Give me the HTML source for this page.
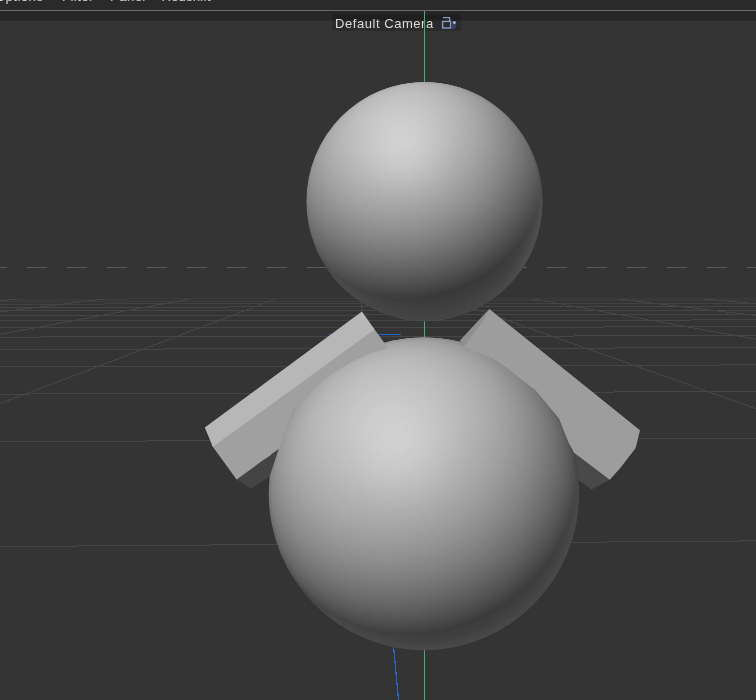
<!DOCTYPE html>
<html><head><meta charset="utf-8"><title>Viewport</title>
<style>
html,body{margin:0;padding:0;}
body{width:756px;height:700px;overflow:hidden;position:relative;background:#343434;font-family:"Liberation Sans",sans-serif;}
#menubar{position:absolute;left:0;top:0;width:756px;height:10px;background:#2a2a2a;overflow:hidden;}
#menubar span{position:absolute;top:-10.4px;font-size:13px;line-height:14px;letter-spacing:0.5px;color:#d0d0d0;white-space:nowrap;}
#sep{position:absolute;left:0;top:10px;width:756px;height:1px;background:#6c6c6c;}
#band{position:absolute;left:0;top:11px;width:756px;height:9px;background:#262626;}
#band2{position:absolute;left:0;top:20px;width:756px;height:1px;background:#2d2d2d;}
#scene{position:absolute;left:0;top:0;}
#camlabel{position:absolute;left:332px;top:14px;width:129px;height:17px;background:rgba(0,0,0,0.17);border-radius:2px;}
#camlabel span{will-change:transform;position:absolute;left:3px;top:2px;font-size:13px;line-height:15px;letter-spacing:0.55px;color:#dadada;white-space:nowrap;}
#camicon{position:absolute;left:109px;top:2px;}
#yaxis{position:absolute;left:424px;top:11px;width:1px;height:21px;background:#41b06e;}
</style></head><body>
<div id="menubar"><span style="left:-5px">Options</span><span style="left:62px">Filter</span><span style="left:110px">Panel</span><span style="left:161.5px;letter-spacing:0.2px">Redshift</span></div>
<div id="sep"></div><div id="band"></div><div id="band2"></div>
<svg id="scene" width="756" height="700" viewBox="0 0 756 700">
<defs>
<radialGradient id="gSpecH"><stop offset="0" stop-color="#fff" stop-opacity="0.0392"/><stop offset="0.25" stop-color="#fff" stop-opacity="0.0333"/><stop offset="0.5" stop-color="#fff" stop-opacity="0.0196"/><stop offset="0.75" stop-color="#fff" stop-opacity="0.0071"/><stop offset="1" stop-color="#fff" stop-opacity="0"/></radialGradient>
<radialGradient id="gDarkH"><stop offset="0" stop-color="#000" stop-opacity="0"/><stop offset="0.92" stop-color="#000" stop-opacity="0"/><stop offset="1" stop-color="#000" stop-opacity="0.14"/></radialGradient>
<radialGradient id="gRimH"><stop offset="0.000" stop-color="#fff" stop-opacity="0.0000"/><stop offset="0.200" stop-color="#fff" stop-opacity="0.0000"/><stop offset="0.300" stop-color="#fff" stop-opacity="0.0002"/><stop offset="0.400" stop-color="#fff" stop-opacity="0.0008"/><stop offset="0.500" stop-color="#fff" stop-opacity="0.0021"/><stop offset="0.600" stop-color="#fff" stop-opacity="0.0050"/><stop offset="0.700" stop-color="#fff" stop-opacity="0.0110"/><stop offset="0.750" stop-color="#fff" stop-opacity="0.0159"/><stop offset="0.800" stop-color="#fff" stop-opacity="0.0229"/><stop offset="0.850" stop-color="#fff" stop-opacity="0.0330"/><stop offset="0.900" stop-color="#fff" stop-opacity="0.0484"/><stop offset="0.930" stop-color="#fff" stop-opacity="0.0621"/><stop offset="0.950" stop-color="#fff" stop-opacity="0.0746"/><stop offset="0.970" stop-color="#fff" stop-opacity="0.0919"/><stop offset="0.985" stop-color="#fff" stop-opacity="0.1013"/><stop offset="0.995" stop-color="#fff" stop-opacity="0.1013"/><stop offset="1.000" stop-color="#fff" stop-opacity="0.1013"/></radialGradient>
<radialGradient id="gSpecB"><stop offset="0" stop-color="#fff" stop-opacity="0.0431"/><stop offset="0.25" stop-color="#fff" stop-opacity="0.0367"/><stop offset="0.5" stop-color="#fff" stop-opacity="0.0216"/><stop offset="0.75" stop-color="#fff" stop-opacity="0.0078"/><stop offset="1" stop-color="#fff" stop-opacity="0"/></radialGradient>
<radialGradient id="gRimB"><stop offset="0.000" stop-color="#fff" stop-opacity="0.0000"/><stop offset="0.200" stop-color="#fff" stop-opacity="0.0006"/><stop offset="0.300" stop-color="#fff" stop-opacity="0.0020"/><stop offset="0.400" stop-color="#fff" stop-opacity="0.0045"/><stop offset="0.500" stop-color="#fff" stop-opacity="0.0087"/><stop offset="0.600" stop-color="#fff" stop-opacity="0.0152"/><stop offset="0.700" stop-color="#fff" stop-opacity="0.0251"/><stop offset="0.750" stop-color="#fff" stop-opacity="0.0319"/><stop offset="0.800" stop-color="#fff" stop-opacity="0.0402"/><stop offset="0.850" stop-color="#fff" stop-opacity="0.0509"/><stop offset="0.900" stop-color="#fff" stop-opacity="0.0651"/><stop offset="0.930" stop-color="#fff" stop-opacity="0.0764"/><stop offset="0.950" stop-color="#fff" stop-opacity="0.0859"/><stop offset="0.970" stop-color="#fff" stop-opacity="0.0982"/><stop offset="0.985" stop-color="#fff" stop-opacity="0.1046"/><stop offset="0.995" stop-color="#fff" stop-opacity="0.1046"/><stop offset="1.000" stop-color="#fff" stop-opacity="0.1046"/></radialGradient>


</defs>
<!-- horizon -->
<line x1="-13" y1="267.5" x2="756" y2="267.5" stroke="#585858" stroke-width="1" stroke-dasharray="20 20" shape-rendering="crispEdges"/>
<g stroke="#454545" stroke-width="1" fill="none" shape-rendering="crispEdges">
<line x1="0" y1="546.59" x2="756" y2="540.89" stroke-opacity="1.00"/>
<line x1="0" y1="441.69" x2="756" y2="438.13" stroke-opacity="1.00"/>
<line x1="0" y1="394.11" x2="756" y2="391.52" stroke-opacity="1.00"/>
<line x1="0" y1="366.94" x2="756" y2="364.91" stroke-opacity="1.00"/>
<line x1="0" y1="349.37" x2="756" y2="347.70" stroke-opacity="1.00"/>
<line x1="0" y1="337.08" x2="756" y2="335.66" stroke-opacity="1.00"/>
<line x1="0" y1="328.00" x2="756" y2="326.76" stroke-opacity="1.00"/>
<line x1="0" y1="321.01" x2="756" y2="319.92" stroke-opacity="1.00"/>
<line x1="0" y1="315.47" x2="756" y2="314.49" stroke-opacity="1.00"/>
<line x1="0" y1="310.97" x2="756" y2="310.09" stroke-opacity="1.00"/>
<line x1="0" y1="307.25" x2="756" y2="306.43" stroke-opacity="1.00"/>
<line x1="0" y1="304.11" x2="756" y2="303.36" stroke-opacity="0.80"/>
<line x1="0" y1="301.43" x2="756" y2="300.73" stroke-opacity="0.60"/>
<line x1="0" y1="299.11" x2="756" y2="298.47" stroke-opacity="0.40"/>
<line x1="17.88" y1="299.00" x2="-4531.87" y2="720.00"/>
<line x1="103.72" y1="299.00" x2="-3298.81" y2="720.00"/>
<line x1="189.55" y1="299.00" x2="-2065.74" y2="720.00"/>
<line x1="275.39" y1="299.00" x2="-832.68" y2="720.00"/>
<line x1="447.07" y1="299.00" x2="1633.44" y2="720.00"/>
<line x1="532.90" y1="299.00" x2="2866.51" y2="720.00"/>
<line x1="618.74" y1="299.00" x2="4099.57" y2="720.00"/>
<line x1="704.58" y1="299.00" x2="5332.63" y2="720.00"/>
</g>
<!-- axes -->
<line x1="424.5" y1="31" x2="424.5" y2="700" stroke="#41b06e" stroke-width="1" shape-rendering="crispEdges"/>
<line x1="361.6" y1="303" x2="362.3" y2="311.5" stroke="#4c4c4c" stroke-width="1" shape-rendering="crispEdges"/>
<line x1="392.94" y1="640" x2="398.52" y2="700" stroke="#2366cc" stroke-width="1.2" shape-rendering="crispEdges"/>
<line x1="329" y1="334.5" x2="401" y2="334.8" stroke="#2366cc" stroke-width="1.2" shape-rendering="crispEdges"/>
<!-- head -->
<clipPath id="cH"><ellipse cx="424.6" cy="201.6" rx="118.3" ry="119.9"/></clipPath>
<g clip-path="url(#cH)" style="isolation:isolate">
<ellipse cx="424.6" cy="201.6" rx="118.3" ry="119.9" fill="rgb(52,52,52)"/>
<ellipse cx="424.50" cy="201.33" rx="94.00" ry="119.10" transform="rotate(-111.00 424.50 201.33)" fill="rgb(53,53,53)"/>
<ellipse cx="424.29" cy="200.79" rx="94.00" ry="119.09" transform="rotate(-111.00 424.29 200.79)" fill="rgb(54,54,54)"/>
<ellipse cx="424.09" cy="200.26" rx="93.99" ry="119.08" transform="rotate(-111.00 424.09 200.26)" fill="rgb(55,55,55)"/>
<ellipse cx="423.89" cy="199.72" rx="93.97" ry="119.06" transform="rotate(-111.00 423.89 199.72)" fill="rgb(56,56,56)"/>
<ellipse cx="423.68" cy="199.18" rx="93.95" ry="119.03" transform="rotate(-111.00 423.68 199.18)" fill="rgb(57,57,57)"/>
<ellipse cx="423.48" cy="198.65" rx="93.92" ry="118.99" transform="rotate(-111.00 423.48 198.65)" fill="rgb(58,58,58)"/>
<ellipse cx="423.28" cy="198.11" rx="93.88" ry="118.95" transform="rotate(-111.00 423.28 198.11)" fill="rgb(59,59,59)"/>
<ellipse cx="423.07" cy="197.57" rx="93.84" ry="118.90" transform="rotate(-111.00 423.07 197.57)" fill="rgb(60,60,60)"/>
<ellipse cx="422.87" cy="197.04" rx="93.80" ry="118.84" transform="rotate(-111.00 422.87 197.04)" fill="rgb(61,61,61)"/>
<ellipse cx="422.67" cy="196.50" rx="93.75" ry="118.77" transform="rotate(-111.00 422.67 196.50)" fill="rgb(62,62,62)"/>
<ellipse cx="422.46" cy="195.96" rx="93.69" ry="118.70" transform="rotate(-111.00 422.46 195.96)" fill="rgb(63,63,63)"/>
<ellipse cx="422.26" cy="195.43" rx="93.62" ry="118.62" transform="rotate(-111.00 422.26 195.43)" fill="rgb(64,64,64)"/>
<ellipse cx="422.06" cy="194.89" rx="93.56" ry="118.53" transform="rotate(-111.00 422.06 194.89)" fill="rgb(65,65,65)"/>
<ellipse cx="421.85" cy="194.35" rx="93.48" ry="118.44" transform="rotate(-111.00 421.85 194.35)" fill="rgb(66,66,66)"/>
<ellipse cx="421.65" cy="193.81" rx="93.40" ry="118.33" transform="rotate(-111.00 421.65 193.81)" fill="rgb(67,67,67)"/>
<ellipse cx="421.45" cy="193.28" rx="93.31" ry="118.22" transform="rotate(-111.00 421.45 193.28)" fill="rgb(68,68,68)"/>
<ellipse cx="421.24" cy="192.74" rx="93.22" ry="118.11" transform="rotate(-111.00 421.24 192.74)" fill="rgb(69,69,69)"/>
<ellipse cx="421.04" cy="192.20" rx="93.12" ry="117.98" transform="rotate(-111.00 421.04 192.20)" fill="rgb(70,70,70)"/>
<ellipse cx="420.84" cy="191.67" rx="93.02" ry="117.85" transform="rotate(-111.00 420.84 191.67)" fill="rgb(71,71,71)"/>
<ellipse cx="420.63" cy="191.13" rx="92.91" ry="117.71" transform="rotate(-111.00 420.63 191.13)" fill="rgb(73,73,73)"/>
<ellipse cx="420.43" cy="190.59" rx="92.79" ry="117.56" transform="rotate(-111.00 420.43 190.59)" fill="rgb(74,74,74)"/>
<ellipse cx="420.23" cy="190.06" rx="92.67" ry="117.41" transform="rotate(-111.00 420.23 190.06)" fill="rgb(75,75,75)"/>
<ellipse cx="420.02" cy="189.52" rx="92.54" ry="117.25" transform="rotate(-111.00 420.02 189.52)" fill="rgb(76,76,76)"/>
<ellipse cx="419.82" cy="188.98" rx="92.41" ry="117.08" transform="rotate(-111.00 419.82 188.98)" fill="rgb(77,77,77)"/>
<ellipse cx="419.62" cy="188.44" rx="92.27" ry="116.90" transform="rotate(-111.00 419.62 188.44)" fill="rgb(78,78,78)"/>
<ellipse cx="419.41" cy="187.91" rx="92.12" ry="116.71" transform="rotate(-111.00 419.41 187.91)" fill="rgb(79,79,79)"/>
<ellipse cx="419.21" cy="187.37" rx="91.97" ry="116.52" transform="rotate(-111.00 419.21 187.37)" fill="rgb(80,80,80)"/>
<ellipse cx="419.01" cy="186.83" rx="91.81" ry="116.32" transform="rotate(-111.00 419.01 186.83)" fill="rgb(81,81,81)"/>
<ellipse cx="418.80" cy="186.30" rx="91.65" ry="116.11" transform="rotate(-111.00 418.80 186.30)" fill="rgb(82,82,82)"/>
<ellipse cx="418.60" cy="185.76" rx="91.47" ry="115.89" transform="rotate(-111.00 418.60 185.76)" fill="rgb(83,83,83)"/>
<ellipse cx="418.40" cy="185.22" rx="91.30" ry="115.67" transform="rotate(-111.00 418.40 185.22)" fill="rgb(84,84,84)"/>
<ellipse cx="418.19" cy="184.69" rx="91.11" ry="115.44" transform="rotate(-111.00 418.19 184.69)" fill="rgb(85,85,85)"/>
<ellipse cx="417.99" cy="184.15" rx="90.92" ry="115.20" transform="rotate(-111.00 417.99 184.15)" fill="rgb(86,86,86)"/>
<ellipse cx="417.79" cy="183.61" rx="90.73" ry="114.95" transform="rotate(-111.00 417.79 183.61)" fill="rgb(87,87,87)"/>
<ellipse cx="417.58" cy="183.08" rx="90.53" ry="114.69" transform="rotate(-111.00 417.58 183.08)" fill="rgb(89,89,89)"/>
<ellipse cx="417.38" cy="182.54" rx="90.32" ry="114.43" transform="rotate(-111.00 417.38 182.54)" fill="rgb(90,90,90)"/>
<ellipse cx="417.18" cy="182.00" rx="90.10" ry="114.16" transform="rotate(-111.00 417.18 182.00)" fill="rgb(91,91,91)"/>
<ellipse cx="416.97" cy="181.46" rx="89.88" ry="113.87" transform="rotate(-111.00 416.97 181.46)" fill="rgb(92,92,92)"/>
<ellipse cx="416.77" cy="180.93" rx="89.65" ry="113.58" transform="rotate(-111.00 416.77 180.93)" fill="rgb(93,93,93)"/>
<ellipse cx="416.57" cy="180.39" rx="89.42" ry="113.29" transform="rotate(-111.00 416.57 180.39)" fill="rgb(94,94,94)"/>
<ellipse cx="416.36" cy="179.85" rx="89.18" ry="112.98" transform="rotate(-111.00 416.36 179.85)" fill="rgb(95,95,95)"/>
<ellipse cx="416.16" cy="179.32" rx="88.93" ry="112.67" transform="rotate(-111.00 416.16 179.32)" fill="rgb(96,96,96)"/>
<ellipse cx="415.96" cy="178.78" rx="88.67" ry="112.34" transform="rotate(-111.00 415.96 178.78)" fill="rgb(97,97,97)"/>
<ellipse cx="415.75" cy="178.24" rx="88.41" ry="112.01" transform="rotate(-111.00 415.75 178.24)" fill="rgb(98,98,98)"/>
<ellipse cx="415.55" cy="177.71" rx="88.14" ry="111.67" transform="rotate(-111.00 415.55 177.71)" fill="rgb(99,99,99)"/>
<ellipse cx="415.35" cy="177.17" rx="87.87" ry="111.32" transform="rotate(-111.00 415.35 177.17)" fill="rgb(101,101,101)"/>
<ellipse cx="415.14" cy="176.63" rx="87.58" ry="110.96" transform="rotate(-111.00 415.14 176.63)" fill="rgb(102,102,102)"/>
<ellipse cx="414.94" cy="176.10" rx="87.29" ry="110.60" transform="rotate(-111.00 414.94 176.10)" fill="rgb(103,103,103)"/>
<ellipse cx="414.73" cy="175.56" rx="87.00" ry="110.22" transform="rotate(-111.00 414.73 175.56)" fill="rgb(104,104,104)"/>
<ellipse cx="414.53" cy="175.02" rx="86.69" ry="109.83" transform="rotate(-111.00 414.53 175.02)" fill="rgb(105,105,105)"/>
<ellipse cx="414.33" cy="174.48" rx="86.38" ry="109.44" transform="rotate(-111.00 414.33 174.48)" fill="rgb(106,106,106)"/>
<ellipse cx="414.12" cy="173.95" rx="86.06" ry="109.03" transform="rotate(-111.00 414.12 173.95)" fill="rgb(107,107,107)"/>
<ellipse cx="413.92" cy="173.41" rx="85.73" ry="108.62" transform="rotate(-111.00 413.92 173.41)" fill="rgb(108,108,108)"/>
<ellipse cx="413.72" cy="172.87" rx="85.40" ry="108.20" transform="rotate(-111.00 413.72 172.87)" fill="rgb(109,109,109)"/>
<ellipse cx="413.51" cy="172.34" rx="85.06" ry="107.76" transform="rotate(-111.00 413.51 172.34)" fill="rgb(110,110,110)"/>
<ellipse cx="413.31" cy="171.80" rx="84.71" ry="107.32" transform="rotate(-111.00 413.31 171.80)" fill="rgb(112,112,112)"/>
<ellipse cx="413.11" cy="171.26" rx="84.35" ry="106.87" transform="rotate(-111.00 413.11 171.26)" fill="rgb(113,113,113)"/>
<ellipse cx="412.90" cy="170.73" rx="83.99" ry="106.41" transform="rotate(-111.00 412.90 170.73)" fill="rgb(114,114,114)"/>
<ellipse cx="412.70" cy="170.19" rx="83.61" ry="105.93" transform="rotate(-111.00 412.70 170.19)" fill="rgb(115,115,115)"/>
<ellipse cx="412.50" cy="169.65" rx="83.23" ry="105.45" transform="rotate(-111.00 412.50 169.65)" fill="rgb(116,116,116)"/>
<ellipse cx="412.29" cy="169.12" rx="82.84" ry="104.96" transform="rotate(-111.00 412.29 169.12)" fill="rgb(117,117,117)"/>
<ellipse cx="412.09" cy="168.58" rx="82.44" ry="104.45" transform="rotate(-111.00 412.09 168.58)" fill="rgb(118,118,118)"/>
<ellipse cx="411.89" cy="168.04" rx="82.04" ry="103.94" transform="rotate(-111.00 411.89 168.04)" fill="rgb(119,119,119)"/>
<ellipse cx="411.68" cy="167.50" rx="81.62" ry="103.41" transform="rotate(-111.00 411.68 167.50)" fill="rgb(121,121,121)"/>
<ellipse cx="411.48" cy="166.97" rx="81.20" ry="102.87" transform="rotate(-111.00 411.48 166.97)" fill="rgb(122,122,122)"/>
<ellipse cx="411.28" cy="166.43" rx="80.76" ry="102.33" transform="rotate(-111.00 411.28 166.43)" fill="rgb(123,123,123)"/>
<ellipse cx="411.07" cy="165.89" rx="80.32" ry="101.77" transform="rotate(-111.00 411.07 165.89)" fill="rgb(124,124,124)"/>
<ellipse cx="410.87" cy="165.36" rx="79.87" ry="101.19" transform="rotate(-111.00 410.87 165.36)" fill="rgb(125,125,125)"/>
<ellipse cx="410.67" cy="164.82" rx="79.41" ry="100.61" transform="rotate(-111.00 410.67 164.82)" fill="rgb(126,126,126)"/>
<ellipse cx="410.46" cy="164.28" rx="78.94" ry="100.01" transform="rotate(-111.00 410.46 164.28)" fill="rgb(127,127,127)"/>
<ellipse cx="410.26" cy="163.75" rx="78.46" ry="99.41" transform="rotate(-111.00 410.26 163.75)" fill="rgb(129,129,129)"/>
<ellipse cx="410.06" cy="163.21" rx="77.97" ry="98.79" transform="rotate(-111.00 410.06 163.21)" fill="rgb(130,130,130)"/>
<ellipse cx="409.85" cy="162.67" rx="77.47" ry="98.15" transform="rotate(-111.00 409.85 162.67)" fill="rgb(131,131,131)"/>
<ellipse cx="409.65" cy="162.13" rx="76.96" ry="97.51" transform="rotate(-111.00 409.65 162.13)" fill="rgb(132,132,132)"/>
<ellipse cx="409.45" cy="161.60" rx="76.44" ry="96.85" transform="rotate(-111.00 409.45 161.60)" fill="rgb(133,133,133)"/>
<ellipse cx="409.24" cy="161.06" rx="75.91" ry="96.18" transform="rotate(-111.00 409.24 161.06)" fill="rgb(134,134,134)"/>
<ellipse cx="409.04" cy="160.52" rx="75.37" ry="95.49" transform="rotate(-111.00 409.04 160.52)" fill="rgb(136,136,136)"/>
<ellipse cx="408.84" cy="159.99" rx="74.82" ry="94.79" transform="rotate(-111.00 408.84 159.99)" fill="rgb(137,137,137)"/>
<ellipse cx="408.63" cy="159.45" rx="74.25" ry="94.07" transform="rotate(-111.00 408.63 159.45)" fill="rgb(138,138,138)"/>
<ellipse cx="408.43" cy="158.91" rx="73.68" ry="93.34" transform="rotate(-111.00 408.43 158.91)" fill="rgb(139,139,139)"/>
<ellipse cx="408.23" cy="158.38" rx="73.09" ry="92.60" transform="rotate(-111.00 408.23 158.38)" fill="rgb(140,140,140)"/>
<ellipse cx="408.02" cy="157.84" rx="72.49" ry="91.84" transform="rotate(-111.00 408.02 157.84)" fill="rgb(141,141,141)"/>
<ellipse cx="407.82" cy="157.30" rx="71.87" ry="91.06" transform="rotate(-111.00 407.82 157.30)" fill="rgb(143,143,143)"/>
<ellipse cx="407.62" cy="156.77" rx="71.25" ry="90.27" transform="rotate(-111.00 407.62 156.77)" fill="rgb(144,144,144)"/>
<ellipse cx="407.41" cy="156.23" rx="70.61" ry="89.46" transform="rotate(-111.00 407.41 156.23)" fill="rgb(145,145,145)"/>
<ellipse cx="407.21" cy="155.69" rx="69.96" ry="88.63" transform="rotate(-111.00 407.21 155.69)" fill="rgb(146,146,146)"/>
<ellipse cx="407.01" cy="155.15" rx="69.29" ry="87.79" transform="rotate(-111.00 407.01 155.15)" fill="rgb(147,147,147)"/>
<ellipse cx="406.80" cy="154.62" rx="68.61" ry="86.93" transform="rotate(-111.00 406.80 154.62)" fill="rgb(149,149,149)"/>
<ellipse cx="406.60" cy="154.08" rx="67.92" ry="86.05" transform="rotate(-111.00 406.60 154.08)" fill="rgb(150,150,150)"/>
<ellipse cx="406.40" cy="153.54" rx="67.21" ry="85.15" transform="rotate(-111.00 406.40 153.54)" fill="rgb(151,151,151)"/>
<ellipse cx="406.19" cy="153.01" rx="66.48" ry="84.23" transform="rotate(-111.00 406.19 153.01)" fill="rgb(152,152,152)"/>
<ellipse cx="405.99" cy="152.47" rx="65.74" ry="83.28" transform="rotate(-111.00 405.99 152.47)" fill="rgb(154,154,154)"/>
<ellipse cx="405.79" cy="151.93" rx="64.98" ry="82.32" transform="rotate(-111.00 405.79 151.93)" fill="rgb(155,155,155)"/>
<ellipse cx="405.58" cy="151.40" rx="64.20" ry="81.34" transform="rotate(-111.00 405.58 151.40)" fill="rgb(156,156,156)"/>
<ellipse cx="405.38" cy="150.86" rx="63.41" ry="80.33" transform="rotate(-111.00 405.38 150.86)" fill="rgb(157,157,157)"/>
<ellipse cx="405.17" cy="150.32" rx="62.59" ry="79.30" transform="rotate(-111.00 405.17 150.32)" fill="rgb(159,159,159)"/>
<ellipse cx="404.97" cy="149.79" rx="61.76" ry="78.25" transform="rotate(-111.00 404.97 149.79)" fill="rgb(160,160,160)"/>
<ellipse cx="404.77" cy="149.25" rx="60.91" ry="77.17" transform="rotate(-111.00 404.77 149.25)" fill="rgb(161,161,161)"/>
<ellipse cx="404.56" cy="148.71" rx="60.03" ry="76.06" transform="rotate(-111.00 404.56 148.71)" fill="rgb(162,162,162)"/>
<ellipse cx="404.36" cy="148.17" rx="59.14" ry="74.92" transform="rotate(-111.00 404.36 148.17)" fill="rgb(164,164,164)"/>
<ellipse cx="404.16" cy="147.64" rx="58.22" ry="73.76" transform="rotate(-111.00 404.16 147.64)" fill="rgb(165,165,165)"/>
<ellipse cx="403.95" cy="147.10" rx="57.27" ry="72.56" transform="rotate(-111.00 403.95 147.10)" fill="rgb(166,166,166)"/>
<ellipse cx="403.75" cy="146.56" rx="56.31" ry="71.34" transform="rotate(-111.00 403.75 146.56)" fill="rgb(167,167,167)"/>
<ellipse cx="403.55" cy="146.03" rx="55.31" ry="70.07" transform="rotate(-111.00 403.55 146.03)" fill="rgb(169,169,169)"/>
<ellipse cx="403.34" cy="145.49" rx="54.29" ry="68.78" transform="rotate(-111.00 403.34 145.49)" fill="rgb(170,170,170)"/>
<ellipse cx="403.14" cy="144.95" rx="53.23" ry="67.44" transform="rotate(-111.00 403.14 144.95)" fill="rgb(171,171,171)"/>
<ellipse cx="402.94" cy="144.42" rx="52.15" ry="66.07" transform="rotate(-111.00 402.94 144.42)" fill="rgb(172,172,172)"/>
<ellipse cx="402.73" cy="143.88" rx="51.03" ry="64.65" transform="rotate(-111.00 402.73 143.88)" fill="rgb(174,174,174)"/>
<ellipse cx="402.53" cy="143.34" rx="49.87" ry="63.19" transform="rotate(-111.00 402.53 143.34)" fill="rgb(175,175,175)"/>
<ellipse cx="402.33" cy="142.80" rx="48.68" ry="61.68" transform="rotate(-111.00 402.33 142.80)" fill="rgb(176,176,176)"/>
<ellipse cx="402.12" cy="142.27" rx="47.45" ry="60.11" transform="rotate(-111.00 402.12 142.27)" fill="rgb(178,178,178)"/>
<ellipse cx="401.92" cy="141.73" rx="46.17" ry="58.49" transform="rotate(-111.00 401.92 141.73)" fill="rgb(179,179,179)"/>
<ellipse cx="401.72" cy="141.19" rx="44.84" ry="56.81" transform="rotate(-111.00 401.72 141.19)" fill="rgb(180,180,180)"/>
<ellipse cx="401.51" cy="140.66" rx="43.46" ry="55.06" transform="rotate(-111.00 401.51 140.66)" fill="rgb(182,182,182)"/>
<ellipse cx="401.31" cy="140.12" rx="42.02" ry="53.24" transform="rotate(-111.00 401.31 140.12)" fill="rgb(183,183,183)"/>
<ellipse cx="401.11" cy="139.58" rx="40.52" ry="51.33" transform="rotate(-111.00 401.11 139.58)" fill="rgb(184,184,184)"/>
<ellipse cx="400.90" cy="139.05" rx="38.94" ry="49.34" transform="rotate(-111.00 400.90 139.05)" fill="rgb(186,186,186)"/>
<ellipse cx="400.70" cy="138.51" rx="37.29" ry="47.24" transform="rotate(-111.00 400.70 138.51)" fill="rgb(187,187,187)"/>
<ellipse cx="400.50" cy="137.97" rx="35.54" ry="45.03" transform="rotate(-111.00 400.50 137.97)" fill="rgb(188,188,188)"/>
<ellipse cx="400.29" cy="137.44" rx="33.69" ry="42.68" transform="rotate(-111.00 400.29 137.44)" fill="rgb(190,190,190)"/>
<ellipse cx="400.09" cy="136.90" rx="31.71" ry="40.17" transform="rotate(-111.00 400.09 136.90)" fill="rgb(191,191,191)"/>
<ellipse cx="399.89" cy="136.36" rx="29.58" ry="37.47" transform="rotate(-111.00 399.89 136.36)" fill="rgb(192,192,192)"/>
<ellipse cx="399.68" cy="135.82" rx="27.26" ry="34.54" transform="rotate(-111.00 399.68 135.82)" fill="rgb(194,194,194)"/>
<ellipse cx="399.48" cy="135.29" rx="24.71" ry="31.30" transform="rotate(-111.00 399.48 135.29)" fill="rgb(195,195,195)"/>
<ellipse cx="399.28" cy="134.75" rx="21.83" ry="27.66" transform="rotate(-111.00 399.28 134.75)" fill="rgb(196,196,196)"/>
<ellipse cx="399.07" cy="134.21" rx="18.49" ry="23.42" transform="rotate(-111.00 399.07 134.21)" fill="rgb(198,198,198)"/>
<ellipse cx="398.87" cy="133.68" rx="14.35" ry="18.18" transform="rotate(-111.00 398.87 133.68)" fill="rgb(199,199,199)"/>
<ellipse cx="398.67" cy="133.14" rx="8.30" ry="10.52" transform="rotate(-111.00 398.67 133.14)" fill="rgb(201,201,201)"/>
<ellipse cx="424.6" cy="201.6" rx="118.3" ry="119.9" fill="url(#gRimH)" style="mix-blend-mode:plus-lighter"/>
<circle cx="405.7" cy="155.2" r="53.59" fill="url(#gSpecH)" style="mix-blend-mode:plus-lighter"/>
<circle cx="424.60" cy="183.62" r="136.96" fill="url(#gDarkH)"/>
</g>

<!-- left arm -->
<polygon points="236.6,479.4 251.3,488.7 269.6,476.5 300,440 279,446 237.5,476.5" fill="#444444"/>
<polygon points="212.8,446.8 211.6,443.9 372.7,326.7 374.6,329.4 388.1,347.9 330,420 278.7,449 236.6,479.4" fill="#a0a0a0"/>
<polygon points="204.8,427.6 361.9,311.4 374.6,329.4 212.8,446.8" fill="#b7b7b7"/>
<!-- right arm -->
<polygon points="609.8,479.7 591.6,489.5 578.1,479.7 560,450 575,449.5 611.5,476.8" fill="#494949"/>
<polygon points="489.4,309.1 640,430.3 635.7,448.1 620.9,467.3 609.8,479.7 574.1,452.7 520,420 463.2,346.5 462.5,343" fill="#9d9d9d"/>
<polygon points="489.4,309.1 460.1,340.4 463.2,346.5 482,322.5 487.5,311.5" fill="#8f8f8f"/>
<!-- body -->
<clipPath id="cB"><ellipse cx="424" cy="493.75" rx="155.4" ry="156.75"/></clipPath>
<g clip-path="url(#cB)" style="isolation:isolate">
<ellipse cx="424" cy="493.75" rx="155.4" ry="156.75" fill="rgb(45,45,45)"/>
<ellipse cx="423.87" cy="493.49" rx="137.01" ry="156.07" transform="rotate(-116.67 423.87 493.49)" fill="rgb(46,46,46)"/>
<ellipse cx="423.61" cy="492.96" rx="137.00" ry="156.06" transform="rotate(-116.67 423.61 492.96)" fill="rgb(47,47,47)"/>
<ellipse cx="423.35" cy="492.44" rx="136.99" ry="156.05" transform="rotate(-116.67 423.35 492.44)" fill="rgb(48,48,48)"/>
<ellipse cx="423.09" cy="491.92" rx="136.96" ry="156.02" transform="rotate(-116.67 423.09 491.92)" fill="rgb(49,49,49)"/>
<ellipse cx="422.83" cy="491.39" rx="136.93" ry="155.98" transform="rotate(-116.67 422.83 491.39)" fill="rgb(50,50,50)"/>
<ellipse cx="422.56" cy="490.87" rx="136.89" ry="155.93" transform="rotate(-116.67 422.56 490.87)" fill="rgb(51,51,51)"/>
<ellipse cx="422.30" cy="490.34" rx="136.84" ry="155.87" transform="rotate(-116.67 422.30 490.34)" fill="rgb(53,53,53)"/>
<ellipse cx="422.04" cy="489.82" rx="136.78" ry="155.81" transform="rotate(-116.67 422.04 489.82)" fill="rgb(54,54,54)"/>
<ellipse cx="421.78" cy="489.30" rx="136.71" ry="155.73" transform="rotate(-116.67 421.78 489.30)" fill="rgb(55,55,55)"/>
<ellipse cx="421.52" cy="488.77" rx="136.64" ry="155.64" transform="rotate(-116.67 421.52 488.77)" fill="rgb(56,56,56)"/>
<ellipse cx="421.26" cy="488.25" rx="136.55" ry="155.55" transform="rotate(-116.67 421.26 488.25)" fill="rgb(57,57,57)"/>
<ellipse cx="421.00" cy="487.72" rx="136.46" ry="155.44" transform="rotate(-116.67 421.00 487.72)" fill="rgb(59,59,59)"/>
<ellipse cx="420.74" cy="487.20" rx="136.36" ry="155.33" transform="rotate(-116.67 420.74 487.20)" fill="rgb(60,60,60)"/>
<ellipse cx="420.48" cy="486.68" rx="136.25" ry="155.20" transform="rotate(-116.67 420.48 486.68)" fill="rgb(61,61,61)"/>
<ellipse cx="420.22" cy="486.15" rx="136.13" ry="155.07" transform="rotate(-116.67 420.22 486.15)" fill="rgb(62,62,62)"/>
<ellipse cx="419.95" cy="485.63" rx="136.01" ry="154.93" transform="rotate(-116.67 419.95 485.63)" fill="rgb(63,63,63)"/>
<ellipse cx="419.69" cy="485.10" rx="135.87" ry="154.77" transform="rotate(-116.67 419.69 485.10)" fill="rgb(64,64,64)"/>
<ellipse cx="419.43" cy="484.58" rx="135.73" ry="154.61" transform="rotate(-116.67 419.43 484.58)" fill="rgb(66,66,66)"/>
<ellipse cx="419.17" cy="484.05" rx="135.58" ry="154.44" transform="rotate(-116.67 419.17 484.05)" fill="rgb(67,67,67)"/>
<ellipse cx="418.91" cy="483.53" rx="135.41" ry="154.25" transform="rotate(-116.67 418.91 483.53)" fill="rgb(68,68,68)"/>
<ellipse cx="418.65" cy="483.01" rx="135.25" ry="154.06" transform="rotate(-116.67 418.65 483.01)" fill="rgb(69,69,69)"/>
<ellipse cx="418.39" cy="482.48" rx="135.07" ry="153.86" transform="rotate(-116.67 418.39 482.48)" fill="rgb(70,70,70)"/>
<ellipse cx="418.13" cy="481.96" rx="134.88" ry="153.64" transform="rotate(-116.67 418.13 481.96)" fill="rgb(71,71,71)"/>
<ellipse cx="417.87" cy="481.43" rx="134.68" ry="153.42" transform="rotate(-116.67 417.87 481.43)" fill="rgb(73,73,73)"/>
<ellipse cx="417.61" cy="480.91" rx="134.48" ry="153.19" transform="rotate(-116.67 417.61 480.91)" fill="rgb(74,74,74)"/>
<ellipse cx="417.34" cy="480.39" rx="134.27" ry="152.95" transform="rotate(-116.67 417.34 480.39)" fill="rgb(75,75,75)"/>
<ellipse cx="417.08" cy="479.86" rx="134.05" ry="152.69" transform="rotate(-116.67 417.08 479.86)" fill="rgb(76,76,76)"/>
<ellipse cx="416.82" cy="479.34" rx="133.81" ry="152.43" transform="rotate(-116.67 416.82 479.34)" fill="rgb(77,77,77)"/>
<ellipse cx="416.56" cy="478.81" rx="133.57" ry="152.16" transform="rotate(-116.67 416.56 478.81)" fill="rgb(79,79,79)"/>
<ellipse cx="416.30" cy="478.29" rx="133.33" ry="151.87" transform="rotate(-116.67 416.30 478.29)" fill="rgb(80,80,80)"/>
<ellipse cx="416.04" cy="477.77" rx="133.07" ry="151.58" transform="rotate(-116.67 416.04 477.77)" fill="rgb(81,81,81)"/>
<ellipse cx="415.78" cy="477.24" rx="132.80" ry="151.28" transform="rotate(-116.67 415.78 477.24)" fill="rgb(82,82,82)"/>
<ellipse cx="415.52" cy="476.72" rx="132.52" ry="150.96" transform="rotate(-116.67 415.52 476.72)" fill="rgb(83,83,83)"/>
<ellipse cx="415.26" cy="476.19" rx="132.24" ry="150.63" transform="rotate(-116.67 415.26 476.19)" fill="rgb(84,84,84)"/>
<ellipse cx="415.00" cy="475.67" rx="131.94" ry="150.30" transform="rotate(-116.67 415.00 475.67)" fill="rgb(86,86,86)"/>
<ellipse cx="414.74" cy="475.15" rx="131.64" ry="149.95" transform="rotate(-116.67 414.74 475.15)" fill="rgb(87,87,87)"/>
<ellipse cx="414.47" cy="474.62" rx="131.33" ry="149.59" transform="rotate(-116.67 414.47 474.62)" fill="rgb(88,88,88)"/>
<ellipse cx="414.21" cy="474.10" rx="131.00" ry="149.23" transform="rotate(-116.67 414.21 474.10)" fill="rgb(89,89,89)"/>
<ellipse cx="413.95" cy="473.57" rx="130.67" ry="148.85" transform="rotate(-116.67 413.95 473.57)" fill="rgb(90,90,90)"/>
<ellipse cx="413.69" cy="473.05" rx="130.33" ry="148.46" transform="rotate(-116.67 413.69 473.05)" fill="rgb(92,92,92)"/>
<ellipse cx="413.43" cy="472.53" rx="129.97" ry="148.06" transform="rotate(-116.67 413.43 472.53)" fill="rgb(93,93,93)"/>
<ellipse cx="413.17" cy="472.00" rx="129.61" ry="147.64" transform="rotate(-116.67 413.17 472.00)" fill="rgb(94,94,94)"/>
<ellipse cx="412.91" cy="471.48" rx="129.24" ry="147.22" transform="rotate(-116.67 412.91 471.48)" fill="rgb(95,95,95)"/>
<ellipse cx="412.65" cy="470.95" rx="128.86" ry="146.79" transform="rotate(-116.67 412.65 470.95)" fill="rgb(96,96,96)"/>
<ellipse cx="412.39" cy="470.43" rx="128.47" ry="146.34" transform="rotate(-116.67 412.39 470.43)" fill="rgb(97,97,97)"/>
<ellipse cx="412.13" cy="469.91" rx="128.07" ry="145.88" transform="rotate(-116.67 412.13 469.91)" fill="rgb(99,99,99)"/>
<ellipse cx="411.86" cy="469.38" rx="127.65" ry="145.41" transform="rotate(-116.67 411.86 469.38)" fill="rgb(100,100,100)"/>
<ellipse cx="411.60" cy="468.86" rx="127.23" ry="144.93" transform="rotate(-116.67 411.60 468.86)" fill="rgb(101,101,101)"/>
<ellipse cx="411.34" cy="468.33" rx="126.80" ry="144.44" transform="rotate(-116.67 411.34 468.33)" fill="rgb(102,102,102)"/>
<ellipse cx="411.08" cy="467.81" rx="126.35" ry="143.93" transform="rotate(-116.67 411.08 467.81)" fill="rgb(103,103,103)"/>
<ellipse cx="410.82" cy="467.29" rx="125.90" ry="143.41" transform="rotate(-116.67 410.82 467.29)" fill="rgb(105,105,105)"/>
<ellipse cx="410.56" cy="466.76" rx="125.43" ry="142.88" transform="rotate(-116.67 410.56 466.76)" fill="rgb(106,106,106)"/>
<ellipse cx="410.30" cy="466.24" rx="124.96" ry="142.34" transform="rotate(-116.67 410.30 466.24)" fill="rgb(107,107,107)"/>
<ellipse cx="410.04" cy="465.71" rx="124.47" ry="141.79" transform="rotate(-116.67 410.04 465.71)" fill="rgb(108,108,108)"/>
<ellipse cx="409.78" cy="465.19" rx="123.97" ry="141.22" transform="rotate(-116.67 409.78 465.19)" fill="rgb(109,109,109)"/>
<ellipse cx="409.52" cy="464.66" rx="123.46" ry="140.64" transform="rotate(-116.67 409.52 464.66)" fill="rgb(110,110,110)"/>
<ellipse cx="409.25" cy="464.14" rx="122.94" ry="140.05" transform="rotate(-116.67 409.25 464.14)" fill="rgb(112,112,112)"/>
<ellipse cx="408.99" cy="463.62" rx="122.41" ry="139.44" transform="rotate(-116.67 408.99 463.62)" fill="rgb(113,113,113)"/>
<ellipse cx="408.73" cy="463.09" rx="121.87" ry="138.82" transform="rotate(-116.67 408.73 463.09)" fill="rgb(114,114,114)"/>
<ellipse cx="408.47" cy="462.57" rx="121.31" ry="138.19" transform="rotate(-116.67 408.47 462.57)" fill="rgb(115,115,115)"/>
<ellipse cx="408.21" cy="462.04" rx="120.74" ry="137.54" transform="rotate(-116.67 408.21 462.04)" fill="rgb(116,116,116)"/>
<ellipse cx="407.95" cy="461.52" rx="120.16" ry="136.88" transform="rotate(-116.67 407.95 461.52)" fill="rgb(118,118,118)"/>
<ellipse cx="407.69" cy="461.00" rx="119.57" ry="136.20" transform="rotate(-116.67 407.69 461.00)" fill="rgb(119,119,119)"/>
<ellipse cx="407.43" cy="460.47" rx="118.96" ry="135.52" transform="rotate(-116.67 407.43 460.47)" fill="rgb(120,120,120)"/>
<ellipse cx="407.17" cy="459.95" rx="118.35" ry="134.81" transform="rotate(-116.67 407.17 459.95)" fill="rgb(121,121,121)"/>
<ellipse cx="406.91" cy="459.42" rx="117.72" ry="134.09" transform="rotate(-116.67 406.91 459.42)" fill="rgb(122,122,122)"/>
<ellipse cx="406.64" cy="458.90" rx="117.07" ry="133.36" transform="rotate(-116.67 406.64 458.90)" fill="rgb(124,124,124)"/>
<ellipse cx="406.38" cy="458.38" rx="116.41" ry="132.61" transform="rotate(-116.67 406.38 458.38)" fill="rgb(125,125,125)"/>
<ellipse cx="406.12" cy="457.85" rx="115.74" ry="131.84" transform="rotate(-116.67 406.12 457.85)" fill="rgb(126,126,126)"/>
<ellipse cx="405.86" cy="457.33" rx="115.06" ry="131.06" transform="rotate(-116.67 405.86 457.33)" fill="rgb(127,127,127)"/>
<ellipse cx="405.60" cy="456.80" rx="114.36" ry="130.27" transform="rotate(-116.67 405.60 456.80)" fill="rgb(128,128,128)"/>
<ellipse cx="405.34" cy="456.28" rx="113.64" ry="129.46" transform="rotate(-116.67 405.34 456.28)" fill="rgb(130,130,130)"/>
<ellipse cx="405.08" cy="455.76" rx="112.92" ry="128.63" transform="rotate(-116.67 405.08 455.76)" fill="rgb(131,131,131)"/>
<ellipse cx="404.82" cy="455.23" rx="112.17" ry="127.78" transform="rotate(-116.67 404.82 455.23)" fill="rgb(132,132,132)"/>
<ellipse cx="404.56" cy="454.71" rx="111.42" ry="126.91" transform="rotate(-116.67 404.56 454.71)" fill="rgb(133,133,133)"/>
<ellipse cx="404.30" cy="454.18" rx="110.64" ry="126.03" transform="rotate(-116.67 404.30 454.18)" fill="rgb(134,134,134)"/>
<ellipse cx="404.03" cy="453.66" rx="109.85" ry="125.13" transform="rotate(-116.67 404.03 453.66)" fill="rgb(136,136,136)"/>
<ellipse cx="403.77" cy="453.14" rx="109.05" ry="124.22" transform="rotate(-116.67 403.77 453.14)" fill="rgb(137,137,137)"/>
<ellipse cx="403.51" cy="452.61" rx="108.22" ry="123.28" transform="rotate(-116.67 403.51 452.61)" fill="rgb(138,138,138)"/>
<ellipse cx="403.25" cy="452.09" rx="107.38" ry="122.32" transform="rotate(-116.67 403.25 452.09)" fill="rgb(139,139,139)"/>
<ellipse cx="402.99" cy="451.56" rx="106.53" ry="121.35" transform="rotate(-116.67 402.99 451.56)" fill="rgb(140,140,140)"/>
<ellipse cx="402.73" cy="451.04" rx="105.65" ry="120.35" transform="rotate(-116.67 402.73 451.04)" fill="rgb(142,142,142)"/>
<ellipse cx="402.47" cy="450.52" rx="104.76" ry="119.33" transform="rotate(-116.67 402.47 450.52)" fill="rgb(143,143,143)"/>
<ellipse cx="402.21" cy="449.99" rx="103.85" ry="118.29" transform="rotate(-116.67 402.21 449.99)" fill="rgb(144,144,144)"/>
<ellipse cx="401.95" cy="449.47" rx="102.91" ry="117.23" transform="rotate(-116.67 401.95 449.47)" fill="rgb(145,145,145)"/>
<ellipse cx="401.69" cy="448.94" rx="101.96" ry="116.15" transform="rotate(-116.67 401.69 448.94)" fill="rgb(146,146,146)"/>
<ellipse cx="401.42" cy="448.42" rx="100.99" ry="115.04" transform="rotate(-116.67 401.42 448.42)" fill="rgb(148,148,148)"/>
<ellipse cx="401.16" cy="447.90" rx="100.00" ry="113.91" transform="rotate(-116.67 401.16 447.90)" fill="rgb(149,149,149)"/>
<ellipse cx="400.90" cy="447.37" rx="98.99" ry="112.76" transform="rotate(-116.67 400.90 447.37)" fill="rgb(150,150,150)"/>
<ellipse cx="400.64" cy="446.85" rx="97.95" ry="111.58" transform="rotate(-116.67 400.64 446.85)" fill="rgb(151,151,151)"/>
<ellipse cx="400.38" cy="446.32" rx="96.89" ry="110.37" transform="rotate(-116.67 400.38 446.32)" fill="rgb(153,153,153)"/>
<ellipse cx="400.12" cy="445.80" rx="95.81" ry="109.14" transform="rotate(-116.67 400.12 445.80)" fill="rgb(154,154,154)"/>
<ellipse cx="399.86" cy="445.27" rx="94.70" ry="107.88" transform="rotate(-116.67 399.86 445.27)" fill="rgb(155,155,155)"/>
<ellipse cx="399.60" cy="444.75" rx="93.57" ry="106.59" transform="rotate(-116.67 399.60 444.75)" fill="rgb(156,156,156)"/>
<ellipse cx="399.34" cy="444.23" rx="92.41" ry="105.27" transform="rotate(-116.67 399.34 444.23)" fill="rgb(157,157,157)"/>
<ellipse cx="399.08" cy="443.70" rx="91.23" ry="103.92" transform="rotate(-116.67 399.08 443.70)" fill="rgb(159,159,159)"/>
<ellipse cx="398.81" cy="443.18" rx="90.02" ry="102.54" transform="rotate(-116.67 398.81 443.18)" fill="rgb(160,160,160)"/>
<ellipse cx="398.55" cy="442.65" rx="88.77" ry="101.12" transform="rotate(-116.67 398.55 442.65)" fill="rgb(161,161,161)"/>
<ellipse cx="398.29" cy="442.13" rx="87.50" ry="99.67" transform="rotate(-116.67 398.29 442.13)" fill="rgb(162,162,162)"/>
<ellipse cx="398.03" cy="441.61" rx="86.19" ry="98.18" transform="rotate(-116.67 398.03 441.61)" fill="rgb(163,163,163)"/>
<ellipse cx="397.77" cy="441.08" rx="84.85" ry="96.66" transform="rotate(-116.67 397.77 441.08)" fill="rgb(165,165,165)"/>
<ellipse cx="397.51" cy="440.56" rx="83.48" ry="95.09" transform="rotate(-116.67 397.51 440.56)" fill="rgb(166,166,166)"/>
<ellipse cx="397.25" cy="440.03" rx="82.07" ry="93.48" transform="rotate(-116.67 397.25 440.03)" fill="rgb(167,167,167)"/>
<ellipse cx="396.99" cy="439.51" rx="80.61" ry="91.83" transform="rotate(-116.67 396.99 439.51)" fill="rgb(168,168,168)"/>
<ellipse cx="396.73" cy="438.99" rx="79.12" ry="90.13" transform="rotate(-116.67 396.73 438.99)" fill="rgb(170,170,170)"/>
<ellipse cx="396.47" cy="438.46" rx="77.59" ry="88.38" transform="rotate(-116.67 396.47 438.46)" fill="rgb(171,171,171)"/>
<ellipse cx="396.21" cy="437.94" rx="76.01" ry="86.58" transform="rotate(-116.67 396.21 437.94)" fill="rgb(172,172,172)"/>
<ellipse cx="395.94" cy="437.41" rx="74.37" ry="84.72" transform="rotate(-116.67 395.94 437.41)" fill="rgb(173,173,173)"/>
<ellipse cx="395.68" cy="436.89" rx="72.69" ry="82.80" transform="rotate(-116.67 395.68 436.89)" fill="rgb(174,174,174)"/>
<ellipse cx="395.42" cy="436.37" rx="70.95" ry="80.82" transform="rotate(-116.67 395.42 436.37)" fill="rgb(176,176,176)"/>
<ellipse cx="395.16" cy="435.84" rx="69.15" ry="78.77" transform="rotate(-116.67 395.16 435.84)" fill="rgb(177,177,177)"/>
<ellipse cx="394.90" cy="435.32" rx="67.29" ry="76.65" transform="rotate(-116.67 394.90 435.32)" fill="rgb(178,178,178)"/>
<ellipse cx="394.64" cy="434.79" rx="65.35" ry="74.45" transform="rotate(-116.67 394.64 434.79)" fill="rgb(179,179,179)"/>
<ellipse cx="394.38" cy="434.27" rx="63.34" ry="72.15" transform="rotate(-116.67 394.38 434.27)" fill="rgb(181,181,181)"/>
<ellipse cx="394.12" cy="433.75" rx="61.25" ry="69.77" transform="rotate(-116.67 394.12 433.75)" fill="rgb(182,182,182)"/>
<ellipse cx="393.86" cy="433.22" rx="59.06" ry="67.27" transform="rotate(-116.67 393.86 433.22)" fill="rgb(183,183,183)"/>
<ellipse cx="393.60" cy="432.70" rx="56.76" ry="64.66" transform="rotate(-116.67 393.60 432.70)" fill="rgb(184,184,184)"/>
<ellipse cx="393.33" cy="432.17" rx="54.35" ry="61.91" transform="rotate(-116.67 393.33 432.17)" fill="rgb(186,186,186)"/>
<ellipse cx="393.07" cy="431.65" rx="51.80" ry="59.01" transform="rotate(-116.67 393.07 431.65)" fill="rgb(187,187,187)"/>
<ellipse cx="392.81" cy="431.13" rx="49.10" ry="55.93" transform="rotate(-116.67 392.81 431.13)" fill="rgb(188,188,188)"/>
<ellipse cx="392.55" cy="430.60" rx="46.21" ry="52.64" transform="rotate(-116.67 392.55 430.60)" fill="rgb(189,189,189)"/>
<ellipse cx="392.29" cy="430.08" rx="43.11" ry="49.10" transform="rotate(-116.67 392.29 430.08)" fill="rgb(191,191,191)"/>
<ellipse cx="392.03" cy="429.55" rx="39.73" ry="45.26" transform="rotate(-116.67 392.03 429.55)" fill="rgb(192,192,192)"/>
<ellipse cx="391.77" cy="429.03" rx="36.01" ry="41.02" transform="rotate(-116.67 391.77 429.03)" fill="rgb(193,193,193)"/>
<ellipse cx="391.51" cy="428.51" rx="31.82" ry="36.25" transform="rotate(-116.67 391.51 428.51)" fill="rgb(194,194,194)"/>
<ellipse cx="391.25" cy="427.98" rx="26.95" ry="30.70" transform="rotate(-116.67 391.25 427.98)" fill="rgb(196,196,196)"/>
<ellipse cx="390.99" cy="427.46" rx="20.91" ry="23.82" transform="rotate(-116.67 390.99 427.46)" fill="rgb(197,197,197)"/>
<ellipse cx="390.72" cy="426.93" rx="12.10" ry="13.78" transform="rotate(-116.67 390.72 426.93)" fill="rgb(198,198,198)"/>
<ellipse cx="424" cy="493.75" rx="155.4" ry="156.75" fill="url(#gRimB)" style="mix-blend-mode:plus-lighter"/>
<circle cx="400.7" cy="451.3" r="70.23" fill="url(#gSpecB)" style="mix-blend-mode:plus-lighter"/>
</g>

<!-- arm parts in front of body (intersection) -->
<polygon points="388.1,347.9 369.8,353.5 354,360.6 331.7,374 315.9,386.8 309.5,394.8 293.4,410.6 283.9,434.4 278.7,449 265,458.9 262,442 285,415 300,395 330,368 360,347 380,338" fill="#a0a0a0"/>
<polygon points="278.7,449 275.1,460 269.6,476.5 268,470 269.5,459 272,453.8" fill="#444444"/>
<polygon points="463.2,346.5 479.7,353.5 492.4,358.3 506.7,367.8 522.5,380.5 535.2,390 543.2,399.5 559,418.6 568.6,442.4 574.1,452.7 580,445 565,410 545,385 520,362 495,345 475,336" fill="#9d9d9d"/>
<polygon points="489.4,309.1 460.1,340.4 463.2,346.5 482,322.5 487.5,311.5" fill="#8f8f8f"/>
</svg>
<div id="camlabel"><span>Default Camera</span>
<svg id="camicon" width="16" height="14" viewBox="0 0 16 14">
<path d="M2 1.6 H8.6 V5" fill="none" stroke="#8f99c8" stroke-width="1.3"/>
<rect x="1.6" y="5.4" width="8" height="6.6" fill="none" stroke="#8f99c8" stroke-width="1.4"/>
<ellipse cx="12.7" cy="9.1" rx="2.5" ry="4" fill="#3a4262"/>
<circle cx="13.4" cy="6.6" r="1.35" fill="#b9c3ea"/>
</svg></div>
<div id="yaxis"></div>
</body></html>
